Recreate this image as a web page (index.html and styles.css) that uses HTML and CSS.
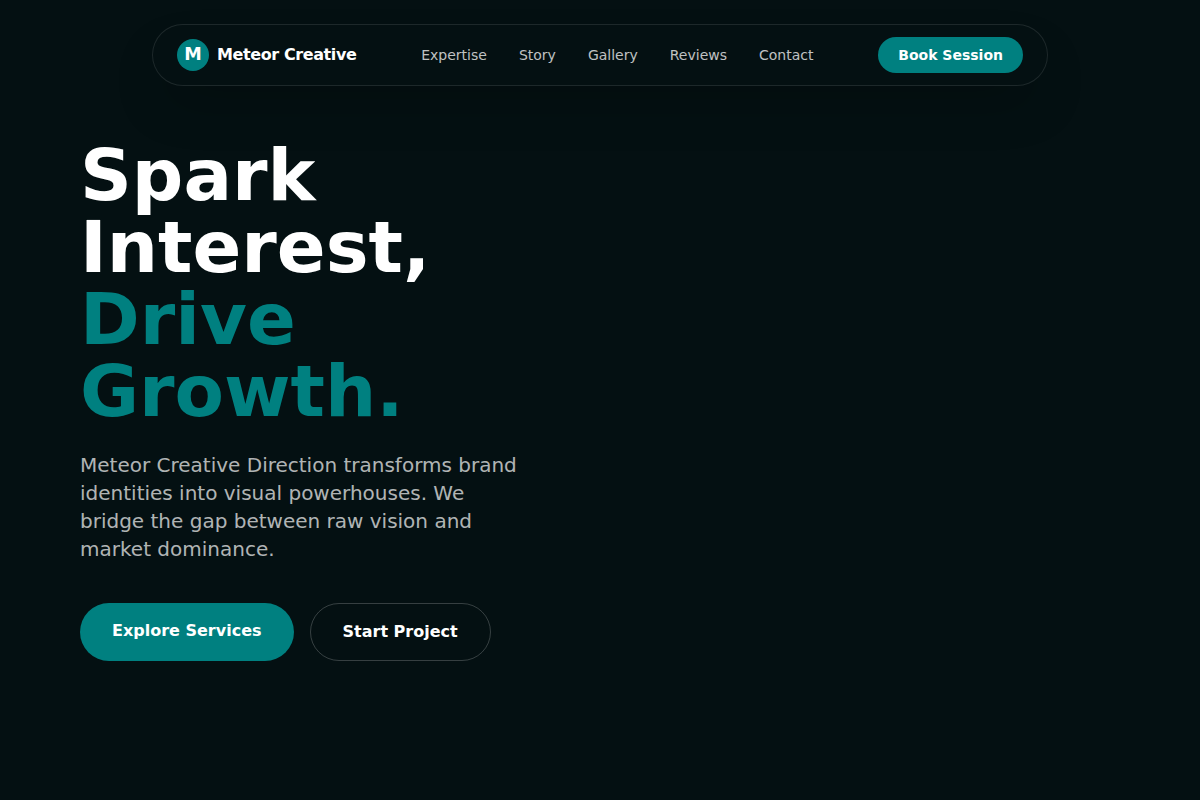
FILE: index.html
```html
<!DOCTYPE html>
<html lang="en">
<head>
    <meta charset="UTF-8">
    <meta name="viewport" content="width=device-width, initial-scale=1.0">
    <title>Meteor Creative</title>
    <link rel="stylesheet" href="styles.css">
</head>
<body>
    <header class="navbar">
        <a href="#" class="brand">
            <span class="brand-mark">M</span>
            <span class="brand-name">Meteor Creative</span>
        </a>
        <nav class="nav-links">
            <a href="#">Expertise</a>
            <a href="#">Story</a>
            <a href="#">Gallery</a>
            <a href="#">Reviews</a>
            <a href="#">Contact</a>
        </nav>
        <a href="#" class="nav-cta">Book Session</a>
    </header>

    <section class="hero">
        <h1>Spark Interest, <span class="accent">Drive Growth.</span></h1>
        <p>Meteor Creative Direction transforms brand identities into visual powerhouses. We bridge the gap between raw vision and market dominance.</p>
        <div class="hero-buttons">
            <a href="#" class="btn btn-primary">Explore Services</a>
            <a href="#" class="btn btn-outline">Start Project</a>
        </div>
    </section>
</body>
</html>
```

FILE: styles.css
```css
* {
    margin: 0;
    padding: 0;
    box-sizing: border-box;
}

body {
    font-family: 'DejaVu Sans', sans-serif;
    background: #041012;
    color: white;
    min-height: 100vh;
    padding-top: 24px;
}

a {
    color: inherit;
    text-decoration: none;
}

.navbar {
    width: 896px;
    height: 62px;
    margin: 0 auto;
    padding: 0 24px;
    display: flex;
    align-items: center;
    justify-content: space-between;
    background: rgba(255, 255, 255, 0.005);
    border: 1px solid rgba(255, 255, 255, 0.1);
    border-radius: 31px;
    box-shadow: 0 25px 50px -12px rgba(0, 0, 0, 0.25);
}

.brand {
    display: flex;
    align-items: center;
    gap: 8px;
}

.brand-mark {
    width: 32px;
    height: 32px;
    border-radius: 50%;
    background: #008080;
    display: flex;
    align-items: center;
    justify-content: center;
    font-weight: bold;
    font-size: 17.6px;
    line-height: 20px;
    padding-bottom: 2px;
}

.brand-name {
    font-weight: bold;
    font-size: 16px;
    letter-spacing: -0.4px;
    line-height: 20px;
}

.nav-links {
    display: flex;
    gap: 32px;
    font-size: 14px;
    color: rgba(255, 255, 255, 0.75);
}

.nav-cta {
    background: #008080;
    padding: 10px 20px;
    border-radius: 18px;
    font-weight: bold;
    font-size: 14px;
    line-height: 16px;
}

.hero {
    width: 450px;
    margin-left: 80px;
    padding-top: 53px;
}

h1 {
    font-size: 72px;
    line-height: 72px;
    font-weight: bold;
    margin-bottom: 24px;
}

.accent {
    color: #008080;
}

.hero p {
    font-size: 20px;
    line-height: 28px;
    color: rgba(255, 255, 255, 0.7);
    margin-bottom: 40px;
}

.hero-buttons {
    display: flex;
    gap: 16px;
}

.btn {
    display: block;
    padding: 16px 32px;
    border-radius: 29px;
    font-weight: bold;
    font-size: 16px;
    line-height: 24px;
}

.btn-primary {
    background: #008080;
}

.btn-outline {
    border: 1px solid rgba(255, 255, 255, 0.2);
}
```
